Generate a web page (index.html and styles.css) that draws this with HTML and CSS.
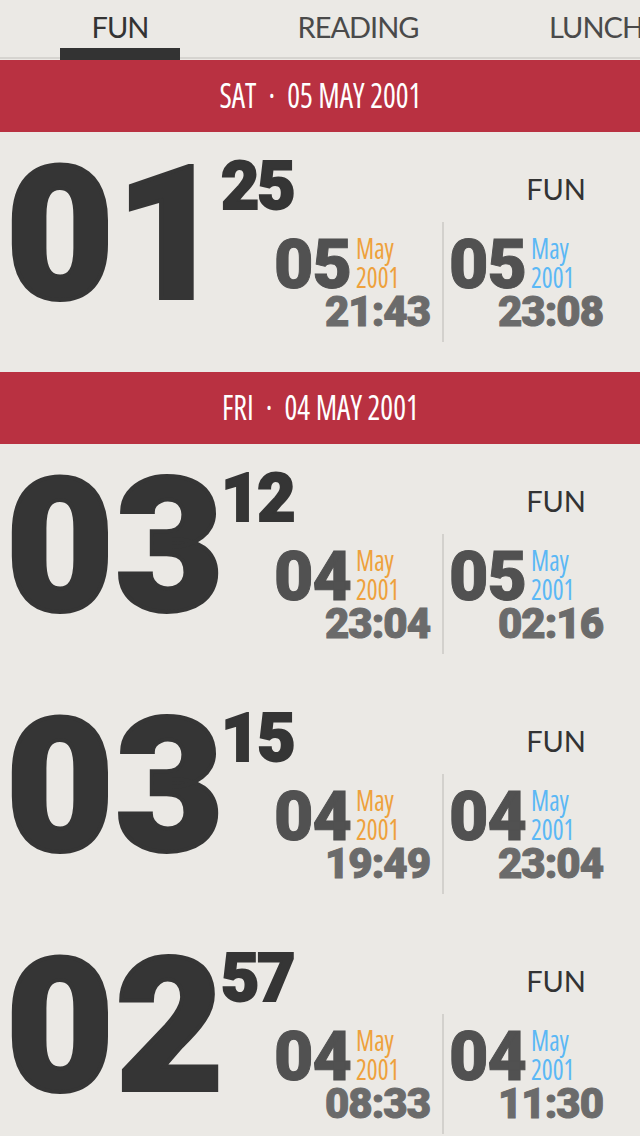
FILE: index.html
```html
<!DOCTYPE html>
<html>
<head>
<meta charset="utf-8">
<title>Log</title>
<link rel="stylesheet" href="styles.css">
</head>
<body>
<div class="screen">
  <nav class="tabbar">
    <div class="tab active"><span class="tab-label">FUN</span><span class="tab-indicator"></span></div>
    <div class="tab"><span class="tab-label">READING</span></div>
    <div class="tab"><span class="tab-label">LUNCH</span></div>
  </nav>

  <div class="day-band"><span class="day-text">SAT<span class="dot">·</span>05 MAY 2001</span></div>

  <section class="entry">
    <div class="hours">01</div>
    <div class="panel">
      <div class="panel-top">
        <span class="minutes">25</span>
        <span class="cat">FUN</span>
      </div>
      <div class="panel-dates">
        <div class="when">
          <div class="date-row"><span class="dd">05</span><span class="my start"><span>May</span><span>2001</span></span></div>
          <div class="time">21:43</div>
        </div>
        <div class="divider"></div>
        <div class="when">
          <div class="date-row"><span class="dd">05</span><span class="my end"><span>May</span><span>2001</span></span></div>
          <div class="time">23:08</div>
        </div>
      </div>
    </div>
  </section>

  <div class="day-band"><span class="day-text">FRI<span class="dot">·</span>04 MAY 2001</span></div>

  <section class="entry">
    <div class="hours">03</div>
    <div class="panel">
      <div class="panel-top">
        <span class="minutes">12</span>
        <span class="cat">FUN</span>
      </div>
      <div class="panel-dates">
        <div class="when">
          <div class="date-row"><span class="dd">04</span><span class="my start"><span>May</span><span>2001</span></span></div>
          <div class="time">23:04</div>
        </div>
        <div class="divider"></div>
        <div class="when">
          <div class="date-row"><span class="dd">05</span><span class="my end"><span>May</span><span>2001</span></span></div>
          <div class="time">02:16</div>
        </div>
      </div>
    </div>
  </section>

  <section class="entry">
    <div class="hours">03</div>
    <div class="panel">
      <div class="panel-top">
        <span class="minutes">15</span>
        <span class="cat">FUN</span>
      </div>
      <div class="panel-dates">
        <div class="when">
          <div class="date-row"><span class="dd">04</span><span class="my start"><span>May</span><span>2001</span></span></div>
          <div class="time">19:49</div>
        </div>
        <div class="divider"></div>
        <div class="when">
          <div class="date-row"><span class="dd">04</span><span class="my end"><span>May</span><span>2001</span></span></div>
          <div class="time">23:04</div>
        </div>
      </div>
    </div>
  </section>

  <section class="entry">
    <div class="hours">02</div>
    <div class="panel">
      <div class="panel-top">
        <span class="minutes">57</span>
        <span class="cat">FUN</span>
      </div>
      <div class="panel-dates">
        <div class="when">
          <div class="date-row"><span class="dd">04</span><span class="my start"><span>May</span><span>2001</span></span></div>
          <div class="time">08:33</div>
        </div>
        <div class="divider"></div>
        <div class="when">
          <div class="date-row"><span class="dd">04</span><span class="my end"><span>May</span><span>2001</span></span></div>
          <div class="time">11:30</div>
        </div>
      </div>
    </div>
  </section>
</div>
</body>
</html>
```
FILE: styles.css
```css
html, body {
  margin: 0;
  padding: 0;
  background: #ebe9e5;
}
body {
  width: 640px;
  height: 1136px;
  overflow: hidden;
  font-family: "Lato", "DejaVu Sans", sans-serif;
  color: #333;
}
.screen {
  display: flex;
  flex-direction: column;
}

/* tabs */
.tabbar {
  height: 60px;
  display: flex;
  padding-left: 1px;
  overflow: hidden;
  background: linear-gradient(#d6d4d0, #d6d4d0) left bottom 1px / 100% 2px no-repeat;
  flex: none;
}
.tab {
  width: 238px;
  flex: none;
  display: flex;
  flex-direction: column;
  align-items: center;
}
.tab-label {
  display: block;
  height: 48px;
  line-height: 53px;
  font-size: 29px;
  font-weight: 400;
  letter-spacing: -1px;
  color: #4a4a4a;
  white-space: nowrap;
}
.tab.active .tab-label {
  color: #333;
}
.tab-indicator {
  display: block;
  width: 120px;
  height: 12px;
  background: #333;
}

/* day header band */
.day-band {
  height: 72px;
  flex: none;
  background: #b93141;
  display: flex;
  align-items: center;
  justify-content: center;
}
.day-text {
  display: inline-block;
  margin-top: -3px;
  font-family: "Open Sans", "DejaVu Sans Condensed", sans-serif;
  font-stretch: 75%;
  font-weight: 500;
  font-size: 35px;
  line-height: 35px;
  color: #fff;
  white-space: nowrap;
  transform: scaleX(0.86);
}
.dot {
  margin: 0 14px;
}

/* entry */
.entry {
  height: 240px;
  flex: none;
  display: flex;
}
.hours {
  width: 214px;
  flex: none;
  padding-left: 6px;
  margin-top: 9px;
  font-family: "Roboto", "Lato", sans-serif;
  font-size: 186px;
  line-height: 186px;
  font-weight: 900;
  letter-spacing: 2px;
  color: #353535;
  -webkit-text-stroke: 4px #353535;
  white-space: nowrap;
}
.panel {
  flex: 1;
  display: flex;
  flex-direction: column;
}
.panel-top {
  height: 90px;
  display: flex;
  align-items: flex-start;
}
.minutes {
  margin-top: 22px;
  margin-left: 1px;
  font-family: "Roboto", "Lato", sans-serif;
  font-size: 66px;
  line-height: 66px;
  font-weight: 900;
  letter-spacing: -2px;
  color: #353535;
  -webkit-text-stroke: 2px #353535;
}
.cat {
  margin-left: auto;
  margin-right: 54px;
  margin-top: 42px;
  font-size: 29px;
  line-height: 29px;
  font-weight: 400;
  letter-spacing: 0;
  color: #333;
}
.panel-dates {
  height: 120px;
  display: flex;
  padding-left: 54px;
}
.when {
  width: 154px;
  flex: none;
  padding-top: 11px;
  display: flex;
  flex-direction: column;
}
.when:first-child {
  width: 156px;
  margin-right: 4px;
}
.divider {
  width: 2px;
  flex: none;
  margin-left: 8px;
  margin-right: 5px;
  background: #d3d1cd;
}
.date-row {
  display: flex;
  align-items: last baseline;
}
.dd {
  font-family: "Roboto", "Lato", sans-serif;
  font-size: 68px;
  line-height: 52px;
  font-weight: 900;
  letter-spacing: -1px;
  color: #515151;
  -webkit-text-stroke: 1px #515151;
}
.my {
  display: flex;
  flex-direction: column;
  margin-left: 5px;
  font-family: "Open Sans", "DejaVu Sans Condensed", sans-serif;
  font-stretch: 75%;
  font-weight: 400;
  font-size: 29px;
  line-height: 29px;
  transform: scaleX(0.88);
  transform-origin: left center;
}
.my.start { color: #eea13c; }
.my.end { color: #5bb8f5; }
.time {
  align-self: flex-end;
  font-family: "Roboto", "Lato", sans-serif;
  font-size: 42px;
  line-height: 42px;
  font-weight: 900;
  letter-spacing: -1px;
  color: #6b6b6b;
  -webkit-text-stroke: 1px #6b6b6b;
}
```
